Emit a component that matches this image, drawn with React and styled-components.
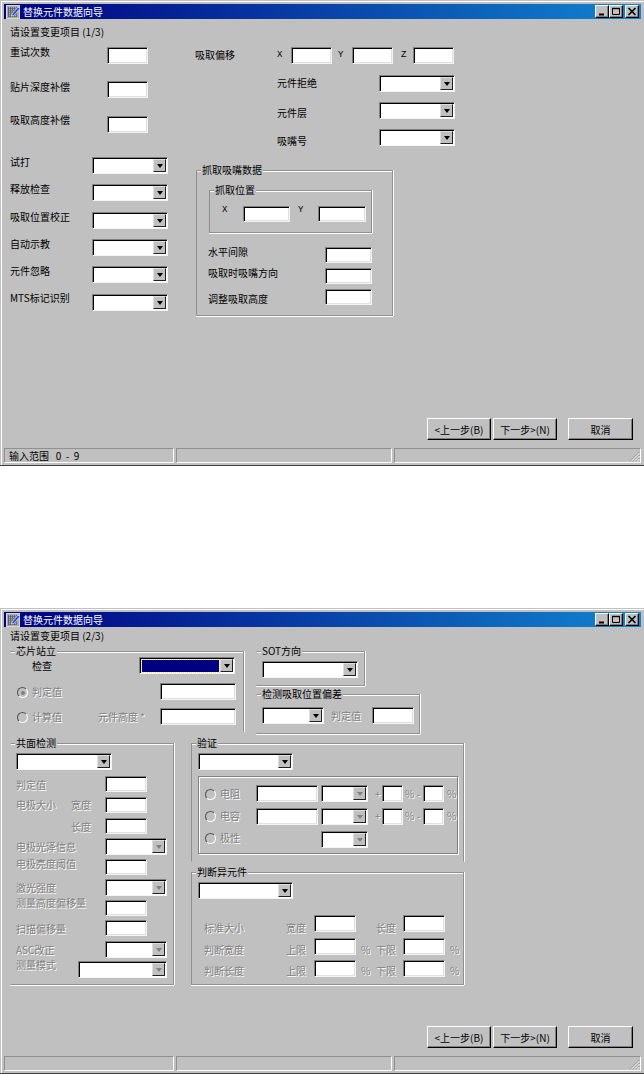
import React from "react";
import styled, { createGlobalStyle } from "styled-components";

const GlobalStyle = createGlobalStyle`
	html, body {
		margin: 0;
		padding: 0;
		background: #fff;
	}
	body {
		font-family: "Noto Sans CJK SC", "Liberation Sans", sans-serif;
		font-size: 10px;
		color: #000;
	}
`;

function TitleIcon() {
	return (
		<svg width="14" height="14" viewBox="0 0 14 14" style={{ flex: "none" }}>
			<rect x="0.5" y="0.5" width="13" height="13" fill="#a8a8a8" stroke="#d8d8d8" />
			<path d="M2 3h10M2 5h10M2 7h10M2 9h10M2 11h10" stroke="#303030" strokeDasharray="1 1" />
			<path d="M3 3v9M5 3v9M7 3v9M9 3v9" stroke="#505050" strokeDasharray="1 1" />
			<path d="M6 9l6-7 2 1.500-6 7-2.500 .5z" fill="#2050e0" stroke="#f0f4ff" strokeWidth="0.7" />
		</svg>
	);
}

function WindowButtons() {
	return (
		<Controls>
			<WinButton>
				<svg width="10" height="9" viewBox="0 0 10 9">
					<path d="M2 7.500h5" stroke="#000" strokeWidth="2" />
				</svg>
			</WinButton>
			<WinButton>
				<svg width="10" height="9" viewBox="0 0 10 9">
					<path d="M1.500 1.500h7v6h-7z" fill="none" stroke="#000" />
					<path d="M1 1.500h8" stroke="#000" strokeWidth="1.400" />
				</svg>
			</WinButton>
			<WinButton $gap>
				<svg width="10" height="9" viewBox="0 0 10 9">
					<path d="M1.500 1l7 7M8.500 1l-7 7" stroke="#000" strokeWidth="1.600" />
				</svg>
			</WinButton>
		</Controls>
	);
}

function Dropdown({ w, off, selected }) {
	return (
		<Select $w={w}>
			<SelectField $selected={selected} />
			<SelectArrow $off={off} />
		</Select>
	);
}

function Wizard({ heading, headTop, status, children }) {
	return (
		<Window>
			<Frame>
				<TitleBar>
					<TitleIcon />
					<TitleText>替换元件数据向导</TitleText>
					<WindowButtons />
				</TitleBar>
				<Client>
					<Heading $top={headTop}>{heading}</Heading>
					{children}
				</Client>
				<Footer>
					<PushButton $w={64}>&lt;上一步(B)</PushButton>
					<PushButton $w={64}>下一步&gt;(N)</PushButton>
					<PushButton $w={65} $gap>取消</PushButton>
				</Footer>
				<StatusBar>
					<StatusPanel $w={170}>{status}</StatusPanel>
					<StatusPanel $w={216} />
					<StatusPanel $grow>
						<Grip width="11" height="11" viewBox="0 0 11 11">
							<path d="M10.500 1L1 10.500M10.500 4L4 10.500M10.500 7L7 10.500" stroke="#808080" />
							<path d="M10.500 2L2 10.500M10.500 5L5 10.500M10.500 8L8 10.500" stroke="#fff" />
						</Grip>
					</StatusPanel>
				</StatusBar>
			</Frame>
		</Window>
	);
}

function FirstPage() {
	const lower = [
		["试打", 24, -1],
		["释放检查", 10, -1],
		["吸取位置校正", 11, -1],
		["自动示教", 10, -1],
		["元件忽略", 10, -1],
		["MTS标记识别", 11, -2],
	];
	return (
		<Wizard heading="请设置变更项目 (1/3)" headTop={7} status={"输入范围   0  -  9"}>
			<Columns>
				<LeftColumn>
					<Row>
						<Label $w={97} $y={-1}>重试次数</Label>
						<TextBox $w={41} />
					</Row>
					<Row $mt={17}>
						<Label $w={97}>贴片深度补偿</Label>
						<TextBox $w={41} />
					</Row>
					<Row $mt={18}>
						<Label $w={97} $y={-2}>吸取高度补偿</Label>
						<TextBox $w={41} />
					</Row>
					{lower.map(([text, mt, y]) => (
						<Row key={text} $mt={mt}>
							<Label $w={82} $y={y}>{text}</Label>
							<Dropdown w={76} />
						</Row>
					))}
				</LeftColumn>
				<RightColumn>
					<Row>
						<Label $w={82} $y={2}>吸取偏移</Label>
						<Axis $w={14}>X</Axis>
						<TextBox $w={41} />
						<Axis $w={20} $pad={6}>Y</Axis>
						<TextBox $w={41} />
						<Axis $w={20} $pad={8}>Z</Axis>
						<TextBox $w={41} />
					</Row>
					<Row $mt={11} $ml={82}>
						<Label $w={102} $y={2}>元件拒绝</Label>
						<Dropdown w={76} />
					</Row>
					<Row $mt={10} $ml={82}>
						<Label $w={102} $y={5}>元件层</Label>
						<Dropdown w={76} />
					</Row>
					<Row $mt={10} $ml={82}>
						<Label $w={102} $y={6}>吸嘴号</Label>
						<Dropdown w={76} />
					</Row>
					<Group $w={197} $h={146} $mt={23} $ml={1} $pad="0 0 0 11px">
						<Legend>抓取吸嘴数据</Legend>
						<Group $w={163} $h={43} $mt={19} $ml={1} $pad="15px 0 0 12px">
							<Legend>抓取位置</Legend>
							<Row>
								<Axis $w={21} $y={-2}>X</Axis>
								<TextBox $w={47} $h={16} />
								<Axis $w={28} $pad={8} $y={-2}>Y</Axis>
								<TextBox $w={48} $h={16} />
							</Row>
						</Group>
						<Row $mt={14}>
							<Label $w={117} $y={-1}>水平间隙</Label>
							<TextBox $w={47} $h={16} />
						</Row>
						<Row $mt={5}>
							<Label $w={117} $y={-1}>吸取时吸嘴方向</Label>
							<TextBox $w={47} $h={16} />
						</Row>
						<Row $mt={5}>
							<Label $w={117} $y={4}>调整吸取高度</Label>
							<TextBox $w={47} $h={16} />
						</Row>
					</Group>
				</RightColumn>
			</Columns>
		</Wizard>
	);
}

function SecondPage() {
	return (
		<Wizard heading="请设置变更项目 (2/3)" headTop={3}>
			<TopRow>
				<Group $w={234} $h={81} $noLeft $noBottom $pad="5px 0 0 5px">
					<Legend>芯片站立</Legend>
					<Row>
						<Label $w={123} $y={3} $pad={16}>检查</Label>
						<Dropdown w={96} selected />
					</Row>
					<Row $mt={9} $ml={1}>
						<Radio $y={3} $checked />
						<Label $w={128} $y={3} $off>判定值</Label>
						<TextBox $w={76} />
					</Row>
					<Row $mt={8} $ml={1}>
						<Radio $y={3} />
						<Label $w={66} $y={3} $off>计算值</Label>
						<Label $w={62} $y={3} $off>元件高度 *</Label>
						<TextBox $w={76} />
					</Row>
				</Group>
				<Stack $ml={12}>
					<Group $w={109} $h={35} $noLeft $pad="9px 0 0 5px">
						<Legend>SOT方向</Legend>
						<Dropdown w={96} />
					</Group>
					<Group $w={164} $h={40} $mt={8} $noLeft $pad="12px 0 0 5px">
						<Legend>检测吸取位置偏差</Legend>
						<Row>
							<Dropdown w={62} />
							<Label $w={48} $y={3} $pad={7} $off>判定值</Label>
							<TextBox $w={42} />
						</Row>
					</Group>
				</Stack>
			</TopRow>
			<BottomRow>
				<Group $w={164} $h={242} $noLeft $pad="9px 0 0 5px">
					<Legend>共面检测</Legend>
					<Dropdown w={96} />
					<Row $mt={6}>
						<Label $w={89} $y={3} $off>判定值</Label>
						<TextBox $w={42} $h={16} />
					</Row>
					<Row $mt={5}>
						<Label $w={55} $y={2} $off>电极大小</Label>
						<Label $w={34} $y={2} $off>宽度</Label>
						<TextBox $w={42} $h={16} />
					</Row>
					<Row $mt={5} $ml={55}>
						<Label $w={34} $y={3} $off>长度</Label>
						<TextBox $w={42} $h={16} />
					</Row>
					<Row $mt={4}>
						<Label $w={89} $y={3} $off>电极光泽信息</Label>
						<Dropdown w={62} off />
					</Row>
					<Row $mt={4}>
						<Label $w={89} $y={-1} $off>电极亮度阈值</Label>
						<TextBox $w={42} $h={16} />
					</Row>
					<Row $mt={4}>
						<Label $w={89} $y={3} $off>激光强度</Label>
						<Dropdown w={62} off />
					</Row>
					<Row $mt={4}>
						<Label $w={89} $y={-3} $off>测量高度偏移量</Label>
						<TextBox $w={42} $h={16} />
					</Row>
					<Row $mt={4}>
						<Label $w={89} $y={3} $off>扫描偏移量</Label>
						<TextBox $w={42} $h={16} />
					</Row>
					<Row $mt={5}>
						<Label $w={89} $y={3} $off>ASC改正</Label>
						<Dropdown w={62} off />
					</Row>
					<Row $mt={3}>
						<Label $w={62} $y={-2} $off>测量模式</Label>
						<Dropdown w={89} off />
					</Row>
				</Group>
				<Stack $ml={17}>
					<Group $w={273} $h={119} $noBottom $pad="9px 0 0 6px">
						<Legend>验证</Legend>
						<Dropdown w={95} />
						<InnerBox>
							<ToleranceRow label="电阻" y={3} />
							<ToleranceRow label="电容" y={2} mt={6} />
							<Row $mt={6}>
								<Radio $y={1} />
								<Label $w={101} $y={1} $off>极性</Label>
								<Dropdown w={47} off />
							</Row>
						</InnerBox>
					</Group>
					<Group $w={273} $h={113} $mt={10} $pad="9px 0 0 6px">
						<Legend>判断异元件</Legend>
						<Dropdown w={95} />
						<LimitRow mt={16} y={7} name="标准大小" a="宽度" b="长度" />
						<LimitRow mt={4} y={6} name="判断宽度" a="上限" b="下限" percent />
						<LimitRow mt={4} y={5} name="判断长度" a="上限" b="下限" percent />
					</Group>
				</Stack>
			</BottomRow>
		</Wizard>
	);
}

function ToleranceRow({ label, y, mt }) {
	return (
		<Row $mt={mt}>
			<Radio $y={y} />
			<Label $w={36} $y={y} $off>{label}</Label>
			<TextBox $w={62} />
			<Label $w={3} />
			<Dropdown w={47} off />
			<Label $w={14} $y={y} $pad={7} $off>+</Label>
			<TextBox $w={21} />
			<Label $w={14} $y={y} $pad={2} $off>%</Label>
			<Label $w={6} $y={y} $off>-</Label>
			<TextBox $w={21} />
			<Label $y={y} $pad={3} $off>%</Label>
		</Row>
	);
}

function LimitRow({ mt, y, name, a, b, percent }) {
	return (
		<Row $mt={mt} $ml={6}>
			<Label $w={82} $y={y} $off>{name}</Label>
			<Label $w={28} $y={y} $off>{a}</Label>
			<TextBox $w={42} />
			<Label $w={20} $y={y} $pad={5} $off>{percent ? "%" : ""}</Label>
			<Label $w={27} $y={y} $off>{b}</Label>
			<TextBox $w={42} />
			<Label $y={y} $pad={5} $off>{percent ? "%" : ""}</Label>
		</Row>
	);
}

export default function App() {
	return (
		<>
			<GlobalStyle />
			<FirstPage />
			<Gap />
			<SecondPage />
		</>
	);
}

const Gap = styled.div`
	height: 142px;
`;

const Window = styled.div`
	box-sizing: border-box;
	display: flex;
	width: 644px;
	height: 466px;
	padding: 1px 0 0 1px;
	background: #c0c0c0;
	border-bottom: 1px solid #404040;
`;

const Frame = styled.div`
	flex: 1;
	min-width: 0;
	display: flex;
	flex-direction: column;
	padding: 2px 3px 2px 2px;
	border-top: 1px solid #fff;
	border-left: 1px solid #fff;
`;

const TitleBar = styled.div`
	display: flex;
	align-items: center;
	height: 15px;
	flex: none;
	padding: 0 2px;
	background: linear-gradient(90deg, #000080, #1084d0);
`;

const TitleText = styled.span`
	flex: 1;
	margin-left: 3px;
	color: #fff;
	font-size: 10px;
	line-height: 15px;
`;

const Controls = styled.div`
	display: flex;
`;

const WinButton = styled.div`
	box-sizing: border-box;
	width: 14px;
	height: 13px;
	margin-left: ${(p) => (p.$gap ? "2px" : "0")};
	display: flex;
	align-items: center;
	justify-content: center;
	background: #c0c0c0;
	border: 1px solid;
	border-color: #fff #000 #000 #fff;
	box-shadow: inset -1px -1px 0 #808080;
`;

const Client = styled.div`
	flex: 1;
	padding-left: 6px;
`;

const Heading = styled.div`
	margin-top: ${(p) => p.$top}px;
	line-height: 12px;
	white-space: pre;
`;

const Columns = styled.div`
	display: flex;
	margin-top: 9px;
`;

const LeftColumn = styled.div`
	width: 185px;
	flex: none;
`;

const RightColumn = styled.div`
	flex: 1;
`;

const TopRow = styled.div`
	display: flex;
	margin-top: 9px;
`;

const BottomRow = styled.div`
	display: flex;
	margin-top: 9px;
`;

const Stack = styled.div`
	margin-left: ${(p) => p.$ml || 0}px;
`;

const Row = styled.div`
	display: flex;
	align-items: flex-start;
	margin-top: ${(p) => p.$mt || 0}px;
	margin-left: ${(p) => p.$ml || 0}px;
`;

const Label = styled.span`
	box-sizing: border-box;
	flex: none;
	${(p) => (p.$w ? `width: ${p.$w}px;` : "")}
	margin-top: ${(p) => p.$y || 0}px;
	padding-left: ${(p) => p.$pad || 0}px;
	line-height: 12px;
	white-space: nowrap;
	color: ${(p) => (p.$off ? "#808080" : "#000")};
	text-shadow: ${(p) => (p.$off ? "1px 1px 0 #fff" : "none")};
`;

const Axis = styled.span`
	box-sizing: border-box;
	flex: none;
	width: ${(p) => p.$w}px;
	padding-left: ${(p) => p.$pad || 0}px;
	margin-top: ${(p) => p.$y || 2}px;
	font-family: "Liberation Mono", monospace;
	font-size: 9px;
	line-height: 12px;
`;

const TextBox = styled.input.attrs({ readOnly: true })`
	box-sizing: border-box;
	flex: none;
	display: block;
	width: ${(p) => p.$w}px;
	height: ${(p) => p.$h || 17}px;
	margin: 0;
	padding: 0;
	outline: none;
	background: #fff;
	border: 1px solid;
	border-color: #808080 #f4f4f4 #f4f4f4 #808080;
	box-shadow: inset 1px 1px 0 #000, inset -1px -1px 0 #e0e0e0;
`;

const Select = styled.div`
	box-sizing: border-box;
	flex: none;
	display: flex;
	width: ${(p) => p.$w}px;
	height: 17px;
	padding: 1px 1px 1px 2px;
	background: #fff;
	border: 1px solid;
	border-color: #808080 #f4f4f4 #f4f4f4 #808080;
	box-shadow: inset 1px 1px 0 #000;
`;

const SelectField = styled.div`
	flex: 1;
	margin: 1px 1px 0 0;
	background: ${(p) => (p.$selected ? "#000080" : "#fff")};
	outline: ${(p) => (p.$selected ? "1px dotted #f0e060" : "none")};
`;

const SelectArrow = styled.div`
	box-sizing: border-box;
	flex: none;
	width: 13px;
	display: flex;
	align-items: center;
	justify-content: center;
	background: #c0c0c0;
	border: 1px solid;
	border-color: #dfdfdf #202020 #202020 #dfdfdf;
	&::after {
		content: "";
		border-left: 3.5px solid transparent;
		border-right: 3.5px solid transparent;
		border-top: 4px solid ${(p) => (p.$off ? "#808080" : "#000")};
	}
`;

const Radio = styled.span`
	box-sizing: border-box;
	flex: none;
	display: flex;
	align-items: center;
	justify-content: center;
	width: 11px;
	height: 11px;
	margin: ${(p) => (p.$y || 0) + 1}px 4px 0 0;
	border-radius: 50%;
	background: #c0c0c0;
	border: 1px solid;
	border-color: #505050 #fff #fff #505050;
	&::after {
		content: "";
		width: 4px;
		height: 4px;
		border-radius: 50%;
		background: ${(p) => (p.$checked ? "#808080" : "transparent")};
	}
`;

const Group = styled.div`
	position: relative;
	box-sizing: border-box;
	flex: none;
	width: ${(p) => p.$w}px;
	height: ${(p) => p.$h}px;
	margin-top: ${(p) => p.$mt || 0}px;
	margin-left: ${(p) => p.$ml || 0}px;
	padding: ${(p) => p.$pad};
	border: 1px solid #909090;
	border-left-color: ${(p) => (p.$noLeft ? "transparent" : "#909090")};
	border-bottom-color: ${(p) => (p.$noBottom ? "transparent" : "#909090")};
	box-shadow: inset 0 1px 0 #fff, 1px 0 0 #fff, 0 ${(p) => (p.$noBottom ? 0 : 1)}px 0 #fff;
`;

const Legend = styled.span`
	position: absolute;
	top: -7px;
	left: 4px;
	padding: 0 1px;
	background: #c0c0c0;
	line-height: 12px;
	white-space: nowrap;
`;

const InnerBox = styled.div`
	box-sizing: border-box;
	height: 78px;
	width: 260px;
	margin-top: 6px;
	padding: 8px 0 0 6px;
	border: 1px solid #808080;
	box-shadow: inset 1px 1px 0 #fff, 1px 1px 0 #fff;
`;

const Footer = styled.div`
	flex: none;
	display: flex;
	justify-content: flex-end;
	height: 22px;
	margin-bottom: 8px;
	padding-right: 8px;
`;

const PushButton = styled.div`
	box-sizing: border-box;
	width: ${(p) => p.$w}px;
	margin-left: ${(p) => (p.$gap ? "11px" : "2px")};
	display: flex;
	align-items: center;
	justify-content: center;
	background: #c0c0c0;
	border: 1px solid;
	border-color: #fff #000 #000 #fff;
	box-shadow: inset -1px -1px 0 #808080;
	white-space: nowrap;
`;

const StatusBar = styled.div`
	flex: none;
	display: flex;
	gap: 2px;
	height: 15px;
`;

const StatusPanel = styled.div`
	position: relative;
	box-sizing: border-box;
	${(p) => (p.$grow ? "flex: 1;" : `flex: none; width: ${p.$w}px;`)}
	padding-left: 4px;
	line-height: 13px;
	white-space: pre;
	border: 1px solid;
	border-color: #909090 #fff #fff #909090;
`;

const Grip = styled.svg`
	position: absolute;
	right: 0;
	bottom: 0;
`;
